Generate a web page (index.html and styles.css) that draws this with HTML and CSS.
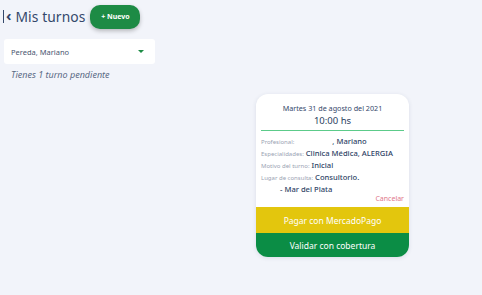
FILE: index.html
```html
<!DOCTYPE html>
<html lang="es">
<head>
<meta charset="utf-8">
<link rel="stylesheet" href="styles.css">
</head>
<body>
<div class="page">
  <header class="header">
    <span class="back"><span class="bar"></span><span class="chev">&lsaquo;</span></span>
    <h1 class="title">Mis turnos</h1>
    <button class="btn-new">+ Nuevo</button>
  </header>
  <div class="content">
    <div class="left">
      <div class="select">
        <span>Pereda, Mariano</span>
        <span class="caret"></span>
      </div>
      <p class="pending">Tienes 1 turno pendiente</p>
    </div>
    <div class="right">
      <div class="card">
        <div class="card-body">
          <div class="date">Martes 31 de agosto del 2021</div>
          <div class="time">10:00 hs</div>
          <div class="line"></div>
          <div class="row"><span class="lbl">Profesional:</span><span class="val gap">, Mariano</span></div>
          <div class="row"><span class="lbl">Especialidades:</span><span class="val">Clinica Médica, ALERGIA</span></div>
          <div class="row"><span class="lbl">Motivo del turno:</span><span class="val">Inicial</span></div>
          <div class="row"><span class="lbl">Lugar de consulta:</span><span class="val">Consultorio.</span></div>
          <div class="row indent"><span class="val">- Mar del Plata</span></div>
          <div class="cancel">Cancelar</div>
        </div>
        <div class="pay">Pagar con MercadoPago</div>
        <div class="validate">Validar con cobertura</div>
      </div>
    </div>
  </div>
</div>
</body>
</html>
```
FILE: styles.css
```css
* { box-sizing: border-box; }
html, body { margin: 0; padding: 0; }
body {
  background: #f2f4fa;
  font-family: "Noto Sans", "DejaVu Sans", sans-serif;
  color: #34486b;
  width: 482px;
  height: 295px;
  overflow: hidden;
}
.header {
  display: flex;
  align-items: center;
  height: 30px;
  padding: 3px 0 0 3px;
}
.back { display: flex; align-items: center; color: #34486b; }
.bar { display: inline-block; width: 1px; height: 13px; background: #34486b; margin-right: 2px; }
.chev { font-size: 15px; line-height: 13px; font-weight: 700; margin-top: -2px; }
.title {
  margin: 0 0 0 4px;
  font-size: 13.8px;
  font-weight: 400;
  color: #34486b;
  letter-spacing: 0.1px;
}
.btn-new {
  margin-left: 5px;
  width: 50px;
  height: 24px;
  border: none;
  border-radius: 10px;
  background: #1d8b45;
  color: #fff;
  font-family: inherit;
  font-size: 7px;
  font-weight: 700;
  box-shadow: 0 2px 4px rgba(0,0,0,0.25);
  padding: 0;
}
.content { display: flex; padding-top: 9px; }
.left { width: 151px; margin-left: 4px; }
.select {
  height: 25px;
  background: #fff;
  border-radius: 3px;
  display: flex;
  align-items: center;
  justify-content: space-between;
  padding: 0 11px 0 7px;
  font-size: 7.5px;
  color: #4a5670;
}
.caret {
  width: 0; height: 0;
  border-left: 3px solid transparent;
  border-right: 3px solid transparent;
  border-top: 3px solid #1d8b45;
}
.pending {
  margin: 4px 0 0 7px;
  font-size: 9px;
  font-style: italic;
  color: #5a6a85;
}
.right { flex: 1; display: flex; padding-left: 101px; padding-top: 55px; }
.card {
  width: 153px;
  height: 163px;
  background: #fff;
  border-radius: 12px;
  overflow: hidden;
  box-shadow: 0 1px 4px rgba(40,60,100,0.12);
  display: flex;
  flex-direction: column;
}
.card-body { padding: 9px 5px 0 5px; flex: 1; }
.date { text-align: center; font-size: 7.2px; color: #34486b; }
.time { text-align: center; font-size: 9.5px; color: #2a3d5e; margin-top: 1px; }
.line { height: 1px; background: #5ccb8a; margin-top: 3px; margin-bottom: 5px; }
.row { display: flex; align-items: baseline; height: 12px; font-size: 7px; white-space: nowrap; }
.lbl { font-size: 6px; color: #9aa3b3; margin-right: 2px; }
.val { font-weight: 500; color: #2f4466; font-size: 7.6px; }
.val.gap { margin-left: 36px; }
.indent { padding-left: 19px; }
.cancel { text-align: right; font-size: 7px; color: #e0788a; margin-top: -2px; }
.pay {
  height: 26px;
  background: #e3c60d;
  color: #fff;
  font-size: 8.5px;
  display: flex; align-items: center; justify-content: center;
}
.validate {
  height: 24px;
  background: #0b8d45;
  color: #fff;
  font-size: 8.5px;
  display: flex; align-items: center; justify-content: center;
}
```
